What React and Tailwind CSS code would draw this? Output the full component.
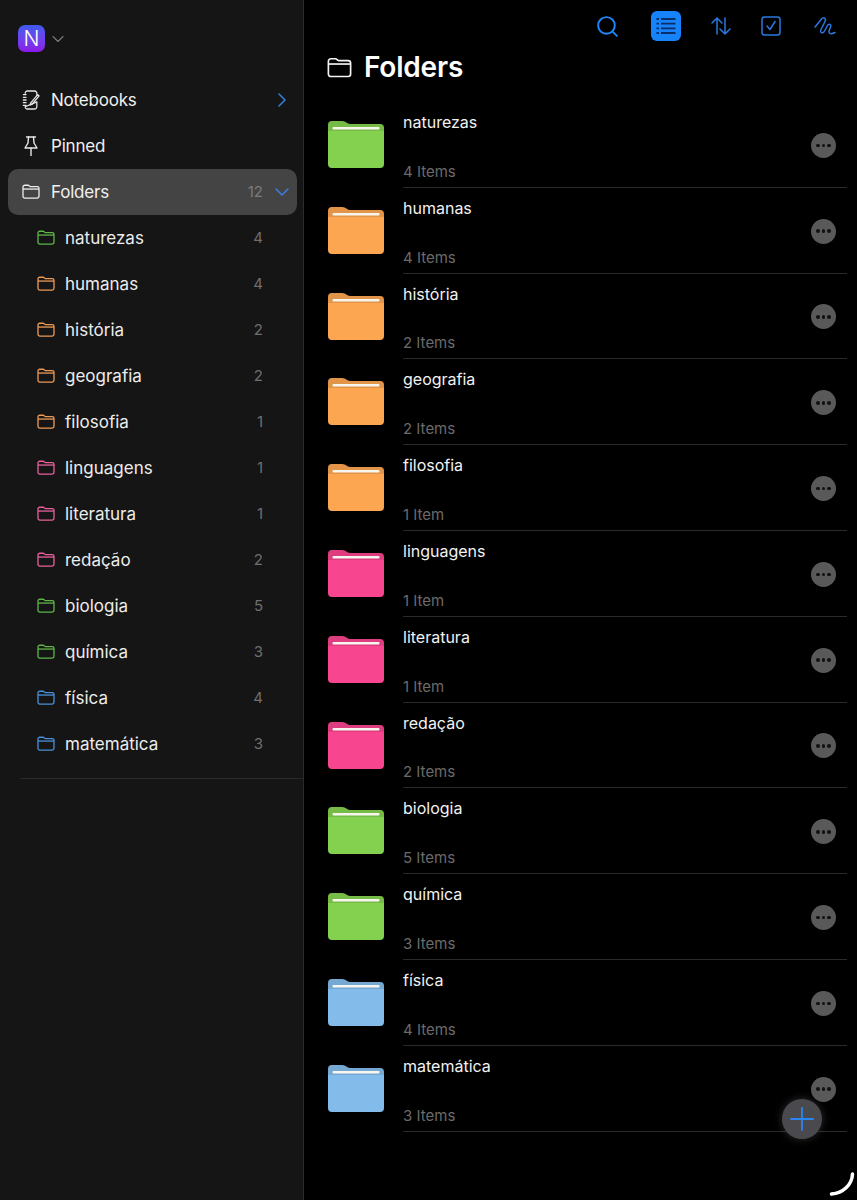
import React from "react";
import { ChevronDown, ChevronRight, Search } from "lucide-react";

const folders = [
  { name: "naturezas", count: 4, big: "#84d14f", line: "#5fb548" },
  { name: "humanas", count: 4, big: "#fca651", line: "#ec9a55" },
  { name: "história", count: 2, big: "#fca651", line: "#ec9a55" },
  { name: "geografia", count: 2, big: "#fca651", line: "#ec9a55" },
  { name: "filosofia", count: 1, big: "#fca651", line: "#ec9a55" },
  { name: "linguagens", count: 1, big: "#f8458f", line: "#e8609c" },
  { name: "literatura", count: 1, big: "#f8458f", line: "#e8609c" },
  { name: "redação", count: 2, big: "#f8458f", line: "#e8609c" },
  { name: "biologia", count: 5, big: "#84d14f", line: "#5fb548" },
  { name: "química", count: 3, big: "#84d14f", line: "#5fb548" },
  { name: "física", count: 4, big: "#83bcea", line: "#4a90d9" },
  { name: "matemática", count: 3, big: "#83bcea", line: "#4a90d9" },
];

function FolderOutline({ color, size = 18, stroke = 1.3 }) {
  return (
    <svg width={size} height={size * 0.84} viewBox="0 0 18 15" fill="none" stroke={color} strokeWidth={stroke} strokeLinejoin="round">
      <path d="M1 3a1.8 1.8 0 0 1 1.8-1.8h3.4c.8 0 1.1.9 2 1.3h7a1.8 1.8 0 0 1 1.8 1.8v7.9a1.8 1.8 0 0 1-1.8 1.8H2.8A1.8 1.8 0 0 1 1 12.2z" />
      <path d="M1 5h16" />
    </svg>
  );
}

function FolderBig({ color }) {
  return (
    <svg width="56" height="47" viewBox="0 0 56 47" className="shrink-0">
      <path d="M0 4a4 4 0 0 1 4-4h10c4 0 5 3 8 3h30a4 4 0 0 1 4 4v36a4 4 0 0 1-4 4H4a4 4 0 0 1-4-4z" fill={color} />
      <path d="M0 4a4 4 0 0 1 4-4h10c4 0 5 3 8 3h30a4 4 0 0 1 4 4v3H0z" fill="#000000" opacity="0.1" />
      <rect x="4.500" y="6" width="47" height="2.600" rx="1" fill="#f6f6ee" />
    </svg>
  );
}

function NotebookIcon() {
  return (
    <svg width="18" height="20" viewBox="0 0 20 22" fill="none" stroke="#e8e8e8" strokeWidth="1.400" strokeLinecap="round" strokeLinejoin="round">
      <path d="M3.500 3.500A2.500 2.500 0 0 1 6 1h8a2.500 2.500 0 0 1 2.500 2.500V6M16.500 13v5.500A2.500 2.500 0 0 1 14 21H6a2.500 2.500 0 0 1-2.500-2.500z" />
      <path d="M1.500 5h3M1.500 8h3M1.500 11h3M1.500 14h3M1.500 17h3" />
      <path d="M9.500 14.500l-.5 2 2-.5 8-9.500-1.500-1.500z" />
    </svg>
  );
}

function PinIcon() {
  return (
    <svg width="14" height="20" viewBox="0 0 14 20" fill="none" stroke="#e8e8e8" strokeWidth="1.400" strokeLinecap="round" strokeLinejoin="round">
      <path d="M2.500 1H11.500" />
      <path d="M4.500 1 4 7 1 12H13L10 7 9.500 1" />
      <path d="M7 12V19.500" />
    </svg>
  );
}

function NavRow({ icon, label, right, active, iconClass }) {
  return (
    <div className={"flex items-center h-[46px] pl-[14px] pr-[3px] rounded-[10px] " + (active ? "bg-[#444444]" : "")}>
      <div className={"w-[29px] flex justify-start " + (iconClass || "")}>{icon}</div>
      <span className="text-[17px] text-[#f0f0f0] tracking-[-0.2px] pt-[2px]">{label}</span>
      <div className="ml-auto flex items-center">{right}</div>
    </div>
  );
}

function Sidebar() {
  return (
    <div className="w-[304px] shrink-0 h-full bg-[#151515] border-r border-[#2b2b2b] flex flex-col">
      <div className="h-[77px] shrink-0 flex items-start pt-[25px] pl-[18px]">
        <div className="w-[27px] h-[27px] rounded-[7px] bg-gradient-to-b from-[#3b5bf0] to-[#8a16e6] flex items-center justify-center text-white text-[21px] font-light leading-none">
          N
        </div>
        <ChevronDown size={20} color="#7c7c7c" strokeWidth={1.300} className="ml-[3px] mt-[4px]" />
      </div>
      <div className="pl-[8px] pr-[6px]">
        <NavRow
          icon={<NotebookIcon />}
          label="Notebooks"
          right={<ChevronRight size={24} color="#3a7fe0" strokeWidth={1.500} />}
        />
        <NavRow icon={<PinIcon />} iconClass="pl-[2px]" label="Pinned" />
        <NavRow
          active
          icon={<FolderOutline color="#ededed" />}
          label="Folders"
          right={
            <>
              <span className="text-[15px] text-[#7a7a7a] mr-[7px]">12</span>
              <ChevronDown size={24} color="#3a7fe0" strokeWidth={1.500} />
            </>
          }
        />
      </div>
      <div className="pl-[37px] pr-[40px]">
        {folders.map((f) => (
          <div key={f.name} className="flex items-center h-[46px]">
            <div className="w-[28px]">
              <FolderOutline color={f.line} />
            </div>
            <span className="text-[17px] text-[#ececec] pt-[2px]">{f.name}</span>
            <span className="ml-auto text-[15px] text-[#6f6f6f]">{f.count}</span>
          </div>
        ))}
      </div>
      <div className="mt-[11px] ml-[20px] border-t border-[#2a2a2a]" />
    </div>
  );
}

function Toolbar() {
  return (
    <div className="h-[52px] flex items-center justify-end pr-[21px]">
      <Search size={25} color="#1f84f5" strokeWidth={1.900} className="mr-[31px]" />
      <div className="w-[30px] h-[30px] rounded-[6px] bg-[#1783fb] flex items-center justify-center mr-[30px]">
        <svg width="20" height="18" viewBox="0 0 20 18" stroke="#0a2f66" strokeWidth="1.800">
          <path d="M0.500 2h2.500M0.500 6.700h2.500M0.500 11.300h2.500M0.500 16h2.500M5 2h14.500M5 6.700h14.500M5 11.300h14.500M5 16h14.500" />
        </svg>
      </div>
      <svg width="20" height="18" viewBox="0 0 20 18" fill="none" stroke="#2a78e0" strokeWidth="1.500" strokeLinecap="round" strokeLinejoin="round" className="mr-[30px]">
        <path d="M6 17V1M1 6l5-5 5 5" />
        <path d="M14 1v16M9 12l5 5 5-5" />
      </svg>
      <svg width="20" height="20" viewBox="0 0 20 20" fill="none" stroke="#2a78e0" strokeWidth="1.500" strokeLinecap="round" strokeLinejoin="round" className="mr-[33px]">
        <rect x="1" y="1" width="18" height="18" rx="2.500" />
        <path d="M6 10l3 3.500 5-8" />
      </svg>
      <svg width="22" height="20" viewBox="0 0 22 20" fill="none" stroke="#2a78e0" strokeWidth="1.500" strokeLinecap="round" strokeLinejoin="round">
        <path d="M1 11L7.500 3C9.500 .500 12.500 2.500 11 5.500L7 13.500C5.500 17 9 18 10.500 15L13.500 9.500C15 7 17.500 8.500 16.500 11L15 15C14.500 18 17 18.500 21 16.500" />
      </svg>
    </div>
  );
}

function FolderRow({ folder }) {
  const items = folder.count === 1 ? "1 Item" : folder.count + " Items";
  return (
    <div className="flex h-[85.8px] pl-[24px] pr-[10px]">
      <div className="pt-[19px] w-[75px] shrink-0">
        <FolderBig color={folder.big} />
      </div>
      <div className="flex-1 border-b border-[#2a2a2a] flex items-center">
        <div className="flex-1 h-full flex flex-col justify-between pt-[9px] pb-[4px]">
          <span className="text-[16px] leading-[22px] text-[#f2f2f2]">{folder.name}</span>
          <span className="text-[15px] leading-[22px] text-[#6b6b6b]">{items}</span>
        </div>
        <div className="w-[25px] h-[25px] rounded-full bg-[#595959] flex items-center justify-center gap-[2px] mr-[11px] mt-[2px]">
          <span className="w-[3.500px] h-[3.500px] rounded-full bg-[#111111]" />
          <span className="w-[3.500px] h-[3.500px] rounded-full bg-[#111111]" />
          <span className="w-[3.500px] h-[3.500px] rounded-full bg-[#111111]" />
        </div>
      </div>
    </div>
  );
}

export default function App() {
  return (
    <div className="relative w-[857px] h-[1200px] overflow-hidden bg-black flex font-['Inter',sans-serif]">
      <Sidebar />
      <div className="flex-1 min-w-0">
        <Toolbar />
        <div className="h-[30px] mb-[20px] flex items-center pl-[23px]">
          <FolderOutline color="#f4f4f4" size={25} stroke={1.200} />
          <span className="ml-[12px] text-[28px] font-semibold text-white tracking-[-0.2px]">Folders</span>
        </div>
        {folders.map((f) => (
          <FolderRow key={f.name} folder={f} />
        ))}
      </div>

      {/* floating add button + corner arc */}
      <div className="absolute left-[782px] top-[1099px] w-[40px] h-[40px] rounded-full bg-[#4a4a4e] shadow-[0_0_8px_rgba(130,130,130,0.35)] flex items-center justify-center">
        <svg width="24" height="24" viewBox="0 0 24 24" stroke="#2a86f0" strokeWidth="1.800" strokeLinecap="round">
          <path d="M12 1v22M1 12h22" />
        </svg>
      </div>
      <svg width="26" height="24" viewBox="0 0 26 24" fill="none" stroke="#ffffff" strokeWidth="3.500" strokeLinecap="round" className="absolute left-[829px] top-[1172px]">
        <path d="M23.500 2C23 13 14 21 2.500 22" />
      </svg>
    </div>
  );
}
